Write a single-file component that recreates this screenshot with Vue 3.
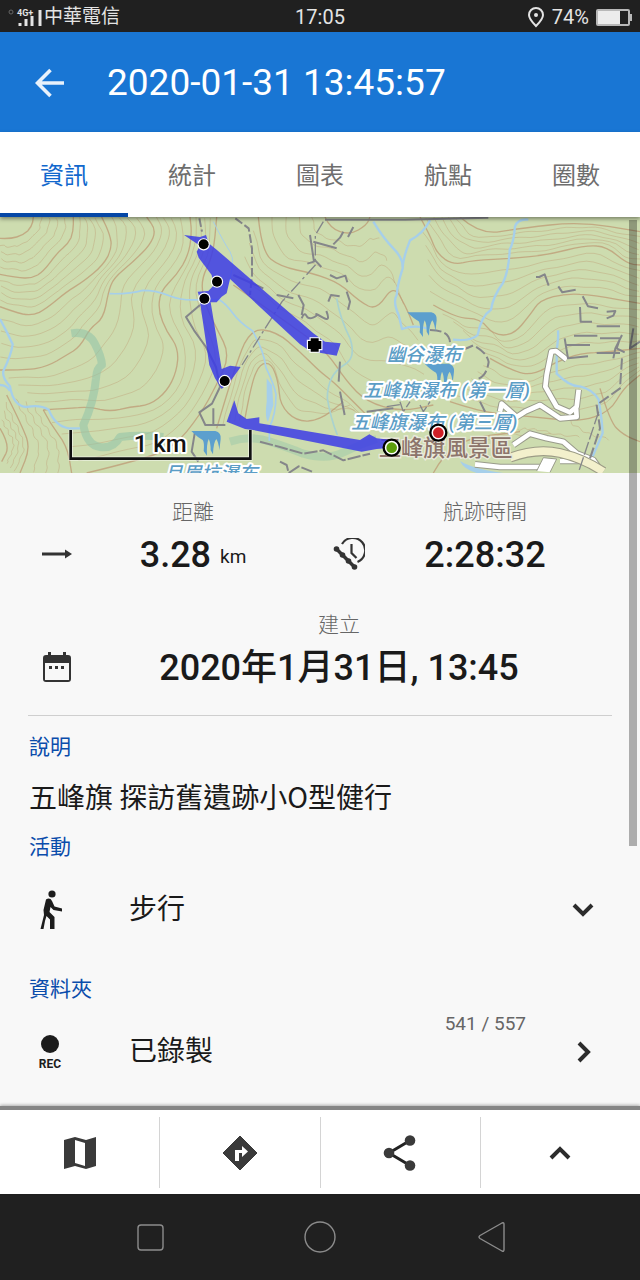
<template>
  <div class="app">
    <div class="status-bar">
      <div class="status-left">
        <svg class="signal" viewBox="0 0 34 24" width="34" height="24" aria-hidden="true">
          <circle cx="3" cy="7" r="2" fill="none" stroke="#666" stroke-width="1" />
          <text x="9" y="11" class="signal-text">4G+</text>
          <path d="M12 18v3M18 14v7M24 11v10M32 5v16" stroke="#e4e4e4" stroke-width="3" />
        </svg>
        <span>中華電信</span>
      </div>
      <span class="clock">17:05</span>
      <div class="status-right">
        <svg viewBox="0 0 18 22" width="18" height="22" aria-hidden="true">
          <path d="M9 2a7 7 0 0 0-7 7c0 4 3 7 7 11 4-4 7-7 7-11a7 7 0 0 0-7-7z" fill="none" stroke="#e4e4e4" stroke-width="2" />
          <circle cx="9" cy="9" r="2" fill="#e4e4e4" />
        </svg>
        <span>74%</span>
        <svg viewBox="0 0 36 18" width="36" height="18" aria-hidden="true">
          <rect x="1" y="2" width="32" height="15" rx="1" fill="none" stroke="#b8b8b8" stroke-width="2" />
          <rect x="2" y="3" width="22" height="13" fill="#ececec" />
          <rect x="34" y="6" width="2" height="7" fill="#b8b8b8" />
        </svg>
      </div>
    </div>

    <header class="header">
      <button class="back" type="button" aria-label="返回">
        <svg viewBox="0 0 30 30" width="30" height="30">
          <path d="M29 15H3M15.500 2 2.500 15l13 13" fill="none" stroke="#e8f1fb" stroke-width="3.600" />
        </svg>
      </button>
      <h1 class="title">2020-01-31 13:45:57</h1>
    </header>

    <nav class="tabs">
      <button
        v-for="tab in tabs"
        :key="tab"
        type="button"
        class="tab"
        :class="{ active: tab === activeTab }"
        @click="activeTab = tab"
      >{{ tab }}</button>
    </nav>

    <main class="content">
      <svg class="map" viewBox="0 6 1920 768">
        <rect y="6" width="1920" height="768" fill="#cddcaf" />
        <g fill="none" stroke-linejoin="round">
          <path v-for="(d, i) in minorLines" :key="'m' + i" :d="d" class="contour" />
          <path v-for="(d, i) in majorLines" :key="'i' + i" :d="d" class="contour major" />
        </g>

        <!-- reserve boundary -->
        <g fill="none" stroke="#8fc2a8" stroke-opacity=".55" stroke-width="24" stroke-linejoin="round">
          <path d="M214 355q50-8 70 30t22 65q-16 8-18 40-6 70-38 140 10 60 50 66t60-30q60-8 130 0" />
          <path d="M690 680q60-20 120 0t100 36q70 20 120-4t100-40" stroke-opacity=".4" />
        </g>

        <!-- streams -->
        <g fill="none" stroke="#a6cfea" stroke-width="7" stroke-linejoin="round">
          <path d="M0 312q22 40 38 76-4 30-28 80-4 20 20 46 10 60 50 62 40-8 66 8 20 50 60 56h34" />
          <path d="M0 510q20 0 30 18" />
          <path d="M328 236q60 2 100-10 40 0 80 16t90 12h60q20 12 40 40t60 54q34 60 40 110 24 50 30 80 0 60-20 100v40" stroke-width="5" />
          <path d="M1120 20q30 50 60 80 30 30 28 60-16 50-18 80-12 20 6 60l10 42q40-14 80 0" />
          <path d="M1290 16q-20 40-60 60-20 50-22 80" />
          <path d="M1585 14q-30-4-40 20-4 50-16 70-2 60-20 100-30 40-36 80-30 20-40 76-20 20-74 14" />
          <path d="M1674 346q2 20-4 60 0 50 0 70 40 40 70 38 40 10 56 40 10 60 12 100l-34 80" />
          <path d="M640 20q30 60 50 90t-10 110" stroke-width="3" />
          <path d="M1010 250q10 60 40 120 20 60-18 80-50 30-50 100 10 60 30 110" stroke="#a9d2cf" stroke-width="5" />
        </g>
        <path d="M800 490l16 20 4 60-16 50q-10-10-4-60z" fill="#a6cfea" />
        <path d="M1380 738q40 24 130 36h-80q-40-12-50-36z" fill="#a6cfea" />

        <!-- roads -->
        <g fill="none" stroke-linejoin="round">
          <path :d="roads" stroke="#999b8b" stroke-width="20" />
          <path :d="roads" stroke="#fff" stroke-width="14" />
          <path d="M1530 728q80-30 150-14t130 56" stroke="#9c9c86" stroke-width="30" />
          <path d="M1530 728q80-30 150-14t130 56" stroke="#f3f0cc" stroke-width="23" />
          <path d="M1610 768l20-40 40 4-20 40" fill="#fff" stroke="#999b8b" stroke-width="3" />
        </g>

        <!-- trails -->
        <g fill="none" stroke="#85868a" stroke-width="6" stroke-linejoin="round">
          <path d="M598 10l8 40M706 10l40 30 10 60v80l-6 60" stroke-dasharray="26 8" />
          <path d="M600 270l-42 36 24 40 36 50 30 60 12 60-24 50-38 26 18 38h60M640 580v50M585 650l-10 60 20 30" />
          <path d="M975 14h240l250-6M1030 50l-10 18-20 20M1060 36l-16 30M930 60l12 80-20 6M940 80l70 20M940 130l24 26" />
          <path d="M970 20l-24 40 0 90-100 110-120 190" stroke-width="4" stroke-dasharray="40 10 8 10" />
          <path d="M990 180l20 10 26-8 6 20M985 260l8-20 26 4M1040 230l10 30-6 24M830 240l20 4 30 6M895 240l16 30-6 30M905 310q8-20 14-8t20 6 10-10 20 10 10-20M1020 440l-4 60M1020 530l14 70M1100 590l80-10M700 180l90 40" />
          <path d="M1608 186h10l16-8 12 34M1675 214l12 18 40-8M1748 244l16 30 30 6M1740 276l2 44h34M1820 290l26-2-6 14-20 8M1790 334h70M1694 370l10 60 60-6M1722 362h70M1700 390h70M1800 370h60l-10 30 24 12M1790 414h70M1866 360l-20 40-6 30M1900 340l-10 60 30-20" />
          <path d="M1290 345q60 0 60 40t70 6q40 20 46 50-6 40-30 50M1440 560l20 40M1866 430l-6 90-70 50 10 70-30 90" stroke-dasharray="34 10" />
          <path d="M1796 590l-60 180M1160 575l40-6M1200 560l10 30 20-30M1260 570l10 20 20-30" stroke-width="4" stroke-dasharray="40 8" />
          <path d="M780 680l60 16 70 20 60-10 60 30 80-20M840 740l20 10 6 24 30-20 40 16" stroke-dasharray="40 6" />
        </g>

        <!-- waterfalls -->
        <g v-for="fall in waterfalls" :key="fall.x" :transform="`translate(${fall.x} ${fall.y})`" fill="#5c9fce">
          <path d="M0 0H72Q90 4 88 24L84 58Q82 34 75 24Q66 34 65 70L58 58Q58 34 52 24Q45 40 47 74L37 60Q40 36 34 27Q20 20 0 0z" />
        </g>

        <g class="water-label">
          <text x="1160" y="437">幽谷瀑布</text>
          <text x="1090" y="545">五峰旗瀑布 (第一層)</text>
          <text x="1053" y="642">五峰旗瀑布 (第三層)</text>
          <text x="492" y="794">月眉坑瀑布</text>
        </g>
        <text x="1136" y="724" class="place-label">五峰旗風景區</text>

        <!-- recorded track -->
        <g fill="#3c3ce6" fill-opacity=".85">
          <path d="M552 60L600 66L618 60L626 85L650 104L940 355L975 380L1022 385L1010 422L930 408L900 388L690 192L680 235L665 245L650 262L618 262L600 252L593 230L625 228L640 212L635 180L596 128L590 110L600 92z" />
          <path d="M600 262L632 262L665 462L690 452L722 456L690 500L665 522L645 490L628 450z" />
          <path d="M703 556L715 595L740 612L778 607L778 625L1080 675L1108 658L1130 670L1175 675V698L1130 702L1085 710L760 645L735 642L680 620z" />
        </g>
        <g class="point">
          <circle v-for="p in trackPoints" :key="p[1]" :cx="p[0]" :cy="p[1]" r="15" />
          <path d="M932 370h24v8h8v24h-8v8h-24v-8h-8v-24h8z" />
        </g>
        <circle cx="1175" cy="698" r="24" fill="#fff" stroke="#000" stroke-width="7" />
        <circle cx="1175" cy="698" r="16" fill="#5c9e0c" />
        <circle cx="1315" cy="653" r="24" fill="#fff" stroke="#000" stroke-width="7" />
        <circle cx="1315" cy="653" r="16" fill="#cf2026" />

        <!-- scale -->
        <path d="M212 645v86h539v-86" fill="none" stroke="#fff" stroke-opacity=".6" stroke-width="13" />
        <path d="M212 645v86h539v-86" fill="none" stroke="#111" stroke-width="8" />
        <text x="401" y="710" class="scale-label">1 km</text>
      </svg>

      <section class="info">
        <div class="stats">
          <div class="stat">
            <svg class="stat-icon" viewBox="0 0 30 30" width="30" height="30">
              <path d="M0 15h25" stroke="#333" stroke-width="3" />
              <path d="M23 10.500l7 4.500-7 4.500z" fill="#333" />
            </svg>
            <span class="stat-label">距離</span>
            <span class="stat-value">3.28 <small>km</small></span>
          </div>
          <div class="stat">
            <svg class="stat-icon" viewBox="0 0 32 32" width="32" height="32">
              <path d="M9 6a12.500 12.500 0 1 1 15.500 18" fill="none" stroke="#333" stroke-width="2.200" />
              <path d="M18.500 6v9l5 5" fill="none" stroke="#333" stroke-width="2.200" />
              <path d="M3.500 11l6 6 6 6 6 6" fill="none" stroke="#333" stroke-width="3.500" />
              <g fill="#333">
                <circle cx="3.500" cy="11" r="2.800" />
                <circle cx="9.500" cy="17" r="2.800" />
                <circle cx="15.500" cy="23" r="2.800" />
                <circle cx="21.500" cy="29" r="2.800" />
              </g>
            </svg>
            <span class="stat-label">航跡時間</span>
            <span class="stat-value">2:28:32</span>
          </div>
          <div class="stat wide">
            <svg class="stat-icon" viewBox="0 0 28 30" width="28" height="30">
              <path d="M5 0h3v3h12V0h3v3h2a3 3 0 0 1 3 3v21a3 3 0 0 1-3 3H3a3 3 0 0 1-3-3V6a3 3 0 0 1 3-3h2zM2 11v17h24V11z" fill="#333" fill-rule="evenodd" />
              <path d="M6 14h3v3H6zM12 14h3v3h-3zM18 14h3v3h-3z" fill="#333" />
            </svg>
            <span class="stat-label">建立</span>
            <span class="stat-value">2020年1月31日, 13:45</span>
          </div>
        </div>

        <h2 class="field-label">說明</h2>
        <p class="description">五峰旗 探訪舊遺跡小O型健行</p>

        <label class="field-label" for="activity">活動</label>
        <div class="row">
          <svg class="row-icon" viewBox="0 0 44 40" width="44" height="40">
            <g fill="#1c1c1c">
              <circle cx="24" cy="4" r="3.600" />
              <path d="M18 9.500Q22 7 24 11L26.500 16.500L34 18.500V21.500L25.500 20L22.500 17L21.500 22L26.500 27V39H22V29.500L18.500 26L17 31L15.500 39H12.500L16 25L15.500 20z" />
            </g>
          </svg>
          <select id="activity" v-model="activity" class="row-text">
            <option>步行</option>
          </select>
          <svg class="chevron" viewBox="0 0 22 22" width="22" height="22">
            <path d="M2 6l9 9 9-9" />
          </svg>
        </div>

        <h2 class="field-label">資料夾</h2>
        <button class="row" type="button">
          <svg class="row-icon" viewBox="0 0 44 40" width="44" height="40">
            <circle cx="22" cy="12" r="9" fill="#1c1c1c" />
            <text x="22" y="36" text-anchor="middle" class="rec">REC</text>
          </svg>
          <span class="row-text">已錄製</span>
          <span class="count">541 / 557</span>
          <svg class="chevron" viewBox="0 0 22 22" width="22" height="22">
            <path d="M7 2l9 9-9 9" />
          </svg>
        </button>
      </section>
      <div class="scrollbar"></div>
    </main>

    <div class="actions">
      <button type="button" aria-label="地圖">
        <svg viewBox="0 0 34 34" width="34" height="34">
          <path d="M1 4l11-3 11 3 10-3v29l-10 3-11-3-11 3zM12 4v23l10 3V7z" fill="#3a3a3a" fill-rule="evenodd" />
        </svg>
      </button>
      <button type="button" aria-label="導航">
        <svg viewBox="0 0 36 36" width="36" height="36">
          <path d="M18 1l17 17-17 17L1 18z" fill="#3a3a3a" stroke="#3a3a3a" stroke-linejoin="round" />
          <path d="M13 26V15h7v-4l6 5.500-6 5.500v-4h-3v8z" fill="#fff" />
        </svg>
      </button>
      <button type="button" aria-label="分享">
        <svg viewBox="0 0 36 36" width="36" height="36">
          <path d="M28 5.500L7 18l21 12.500" fill="none" stroke="#222" stroke-width="3" />
          <g fill="#3a3a3a">
            <circle cx="28" cy="5.500" r="5.300" />
            <circle cx="7" cy="18" r="5.300" />
            <circle cx="28" cy="30.500" r="5.300" />
          </g>
        </svg>
      </button>
      <button type="button" aria-label="更多">
        <svg class="chevron" viewBox="0 0 22 22" width="22" height="22">
          <path d="M2 16l9-9 9 9" />
        </svg>
      </button>
    </div>

    <div class="system-nav">
      <button type="button" aria-label="最近">
        <svg viewBox="0 0 34 34" width="34" height="34"><rect x="5" y="5" width="25" height="25" rx="3" /></svg>
      </button>
      <button type="button" aria-label="主畫面">
        <svg viewBox="0 0 34 34" width="34" height="34"><circle cx="17" cy="17" r="15" /></svg>
      </button>
      <button type="button" aria-label="上一頁">
        <svg viewBox="0 0 34 34" width="34" height="34"><path d="M7 15.500L29 3q2-1 2 1.500v25q0 2.500-2 1.500L7 18.500q-2-1.500 0-3z" /></svg>
      </button>
    </div>
  </div>
</template>

<script setup>
import { ref } from 'vue'

const tabs = ['資訊', '統計', '圖表', '航點', '圈數']
const activeTab = ref('資訊')
const activity = ref('步行')

const trackPoints = [[611, 88], [651, 200], [613, 251], [674, 498]]
const waterfalls = [
  { x: 1222, y: 292 },
  { x: 1274, y: 446 },
  { x: 574, y: 648 }
]
const roads = 'M1700 434L1668 408L1654 410L1640 480L1636 515L1670 575L1710 592L1730 575L1736 524' +
  'M1728 575L1730 606L1680 610L1650 590L1620 570L1575 590L1550 606L1505 566L1500 590' +
  'M1540 690L1590 656L1640 670L1690 680L1730 715L1780 735L1805 770' +
  'M1425 748L1500 756H1620M1680 738H1750'

// Index contours, and how many thin lines run between neighbours of a group
const contourGroups = [
  {
    steps: 4,
    lines: [
      [[0, 70], [30, 72], [70, 60], [95, 35], [100, 6]],
      [[0, 178], [50, 188], [95, 190], [130, 170], [170, 115], [205, 85], [220, 50], [220, 6]],
      [[0, 275], [40, 290], [95, 303], [140, 280], [200, 230], [250, 200], [310, 150], [335, 100], [330, 60], [305, 6]],
      [[0, 465], [80, 465], [140, 455], [200, 420], [240, 395], [270, 340], [310, 310], [325, 230], [340, 190], [400, 140], [450, 90], [468, 45], [440, 6]],
      [[130, 585], [200, 580], [270, 575], [330, 590], [390, 575], [450, 570], [500, 530], [530, 470], [535, 400], [500, 350], [475, 290], [480, 230], [530, 180], [565, 120], [575, 60], [570, 6]],
      [[260, 774], [400, 740], [520, 700], [600, 600], [650, 510], [690, 420], [650, 340], [620, 280], [600, 200], [640, 120], [650, 6]]
    ]
  },
  {
    steps: 3,
    lines: [
      [[0, 640], [30, 690], [5, 740]],
      [[20, 540], [70, 640], [90, 700], [60, 774]],
      [[130, 585], [150, 625], [200, 690], [215, 774]]
    ]
  },
  {
    steps: 4,
    lines: [
      [[975, 6], [990, 40], [1050, 60], [1100, 30], [1110, 6]],
      [[775, 6], [785, 110], [840, 155], [940, 175], [1020, 205], [1080, 260], [1130, 285], [1180, 210], [1215, 270], [1240, 330]],
      [[700, 210], [800, 280], [900, 350], [980, 410], [1040, 500], [1100, 560], [1200, 590], [1300, 570]]
    ]
  },
  {
    steps: 4,
    lines: [
      [[735, 610], [755, 500], [780, 445], [815, 445], [835, 500], [840, 570], [890, 620], [960, 615], [1030, 560]],
      [[650, 640], [700, 470], [750, 340], [830, 350], [900, 410], [960, 470], [1000, 500], [1060, 560], [1120, 620]]
    ]
  },
  {
    steps: 5,
    lines: [
      [[1380, 6], [1440, 60], [1560, 40], [1740, 20], [1920, 50]],
      [[1260, 6], [1290, 60], [1310, 115], [1360, 150], [1420, 135], [1540, 130], [1640, 120], [1760, 90], [1820, 95], [1880, 145], [1920, 150]],
      [[1300, 270], [1370, 310], [1440, 310], [1480, 360], [1540, 360], [1590, 300], [1620, 255], [1700, 235], [1780, 240], [1920, 265]],
      [[1470, 430], [1540, 470], [1600, 480], [1670, 440], [1740, 415], [1830, 410], [1920, 400]],
      [[1350, 560], [1440, 590], [1540, 600], [1640, 610], [1740, 620], [1830, 590], [1870, 520], [1920, 480]]
    ]
  },
  {
    steps: 3,
    lines: [
      [[1300, 774], [1330, 720], [1400, 670], [1560, 650]],
      [[1800, 520], [1830, 620], [1870, 660], [1920, 680]]
    ]
  }
]

// Spread n points evenly along a polyline
const resample = (pts, n) => {
  const lens = [0]
  for (let i = 1; i < pts.length; i++) {
    lens.push(lens[i - 1] + Math.hypot(pts[i][0] - pts[i - 1][0], pts[i][1] - pts[i - 1][1]))
  }
  const total = lens[lens.length - 1]
  return Array.from({ length: n }, (_, k) => {
    const target = (total * k) / (n - 1)
    let i = 1
    while (i < pts.length - 1 && lens[i] < target) i++
    const t = (target - lens[i - 1]) / (lens[i] - lens[i - 1])
    return [0, 1].map(a => pts[i - 1][a] + (pts[i][a] - pts[i - 1][a]) * t)
  })
}

const smooth = (pts) => {
  let d = `M${pts[0].map(Math.round).join(' ')}`
  for (let i = 1; i < pts.length - 1; i++) {
    const mid = [0, 1].map(a => Math.round((pts[i][a] + pts[i + 1][a]) / 2))
    d += `Q${pts[i].map(Math.round).join(' ')} ${mid.join(' ')}`
  }
  return d + `L${pts[pts.length - 1].map(Math.round).join(' ')}`
}

const majorLines = contourGroups.flatMap(g => g.lines.map(smooth))

const minorLines = contourGroups.flatMap(({ lines, steps }) =>
  lines.slice(1).flatMap((line, i) => {
    const from = resample(lines[i], 18)
    const to = resample(line, 18)
    return Array.from({ length: steps }, (_, s) => {
      const t = (s + 1) / (steps + 1)
      return smooth(from.map((p, k) => {
        const wobble = Math.sin(k * 2 + s) * 4
        return [p[0] + (to[k][0] - p[0]) * t + wobble, p[1] + (to[k][1] - p[1]) * t - wobble]
      }))
    })
  })
)
</script>

<style>
body {
  margin: 0;
  background: #f8f8f8;
}
</style>

<style scoped>
.app {
  display: flex;
  flex-direction: column;
  min-height: 100vh;
  background: #f8f8f8;
  color: #1a1a1a;
  font-family: Roboto, "Noto Sans CJK TC", sans-serif;
}

button,
select {
  margin: 0;
  padding: 0;
  border: none;
  background: none;
  color: inherit;
  font: inherit;
  cursor: pointer;
}

svg {
  display: block;
  flex: none;
}

.status-bar {
  display: grid;
  grid-template-columns: 1fr auto 1fr;
  align-items: center;
  box-sizing: border-box;
  height: 32px;
  padding: 1px 8px 0;
  background: #202020;
  color: #e4e4e4;
  font-size: 20px;
  line-height: 32px;
}

.status-left {
  display: flex;
  align-items: center;
  gap: 2px;
  font-size: 19px;
}

.signal-text {
  fill: #e4e4e4;
  font-size: 9px;
  font-weight: 700;
}

.status-right {
  display: flex;
  align-items: center;
  justify-content: flex-end;
  gap: 7px;
}

.header {
  display: flex;
  align-items: center;
  gap: 42px;
  box-sizing: border-box;
  height: 100px;
  padding: 2px 35px 0;
  background: #1976d4;
  color: #fff;
}

.title {
  margin: 0;
  font-size: 37px;
  font-weight: 400;
  line-height: 44px;
}

.tabs {
  display: flex;
  position: relative;
  z-index: 1;
  background: #fff;
  box-shadow: 0 2px 4px rgba(0, 0, 0, 0.4);
}

.tab {
  flex: 1;
  height: 85px;
  padding-bottom: 2px;
  border-top: 4px solid transparent;
  border-bottom: 4px solid transparent;
  color: #6e6e6e;
  font-size: 24px;
}

.tab.active {
  border-bottom-color: #0547a6;
  color: #1168cd;
}

.content {
  position: relative;
  flex: 1;
}

.map {
  width: 100%;
  height: auto;
}

.contour {
  stroke: #bd9a74;
  stroke-opacity: 0.4;
  stroke-width: 3;
}

.contour.major {
  stroke-opacity: 0.75;
  stroke-width: 4;
}

.water-label {
  fill: #5b9dc6;
  stroke: #fff;
  stroke-width: 12px;
  stroke-linejoin: round;
  paint-order: stroke;
  font-size: 56px;
  font-style: italic;
  font-weight: 500;
}

.place-label {
  fill: #8d756c;
  stroke: #e9eadb;
  stroke-width: 8px;
  paint-order: stroke;
  font-size: 67px;
  font-weight: 500;
}

.point {
  stroke: #fff;
  stroke-width: 7px;
  paint-order: stroke;
}

.scale-label {
  fill: #111;
  stroke: #fff;
  stroke-width: 12px;
  stroke-linejoin: round;
  paint-order: stroke;
  font-size: 72px;
  font-weight: 500;
}

.info {
  padding: 23px 28px 4px;
}

.stats {
  display: grid;
  grid-template-columns: 1fr 1fr;
  row-gap: 27px;
  padding-bottom: 20px;
  border-bottom: 1px solid #cfcfcf;
}

.stat {
  display: grid;
  grid-template-columns: 58px 1fr;
  grid-template-rows: 30px 56px;
  padding-right: 20px;
  text-align: center;
}

.stat.wide {
  grid-column: 1 / 3;
}

.stat-icon {
  grid-row: 2;
  grid-column: 1;
  place-self: center;
}

.stat-label {
  grid-column: 2;
  color: #666;
  font-size: 21px;
  font-weight: 300;
  line-height: 32px;
}

.stat-value {
  grid-column: 2;
  font-size: 36px;
  font-weight: 500;
  line-height: 58px;
}

.stat-value small {
  font-size: 19px;
  font-weight: 400;
  vertical-align: 4px;
}

.field-label {
  display: block;
  margin: 16px 0 0 1px;
  color: #0a4cab;
  font-size: 21px;
  font-weight: 400;
  line-height: 30px;
}

.description {
  margin: 14px 0 0 1px;
  font-family: "Noto Sans CJK TC", sans-serif;
  font-size: 28px;
  line-height: 40px;
}

.row {
  display: flex;
  align-items: center;
  box-sizing: border-box;
  width: 100%;
  height: 96px;
  padding-right: 18px;
  text-align: left;
}

.row-icon {
  margin-right: 57px;
}

.row-text {
  flex: 1;
  min-width: 0;
  appearance: none;
  font-size: 28px;
  line-height: 40px;
}

.rec {
  fill: #1c1c1c;
  font-size: 12px;
  font-weight: 700;
}

.count {
  align-self: flex-start;
  margin-right: 46px;
  color: #666;
  font-size: 19px;
  line-height: 40px;
}

.chevron {
  fill: none;
  stroke: #2c2c2c;
  stroke-width: 4px;
}

.scrollbar {
  position: absolute;
  top: 3px;
  right: 3px;
  width: 8px;
  height: 626px;
  background: rgba(0, 0, 0, 0.3);
}

.actions {
  display: flex;
  position: relative;
  height: 84px;
  border-top: 4px solid #868686;
  background: #fff;
  box-shadow: 0 -1px 3px rgba(0, 0, 0, 0.3);
}

.actions button {
  display: flex;
  flex: 1;
  align-items: center;
  justify-content: center;
  margin: 7px 0 6px;
}

.actions button + button {
  border-left: 1px solid #d4d4d4;
}

.system-nav {
  display: flex;
  justify-content: center;
  height: 86px;
  background: #202020;
}

.system-nav button {
  display: flex;
  align-items: center;
  justify-content: center;
  width: 170px;
}

.system-nav svg {
  fill: none;
  stroke: #8c8c8c;
  stroke-width: 1.4px;
}
</style>
